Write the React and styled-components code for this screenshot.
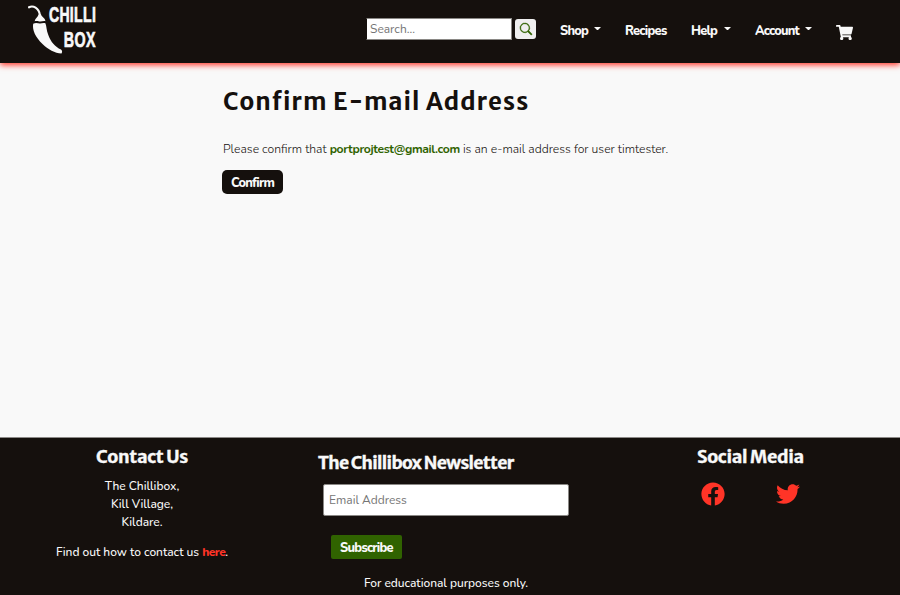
import React from "react";
import styled, { createGlobalStyle } from "styled-components";
import { BsSearch } from "react-icons/bs";
import { FaShoppingCart, FaFacebook, FaTwitter } from "react-icons/fa";

const ink = "#15100d";
const paper = "#f9f9f9";
const chilli = "#ff3427";
const leaf = "#306300";

const GlobalStyle = createGlobalStyle`
  *, *::before, *::after { box-sizing: border-box; }
  body {
    margin: 0;
    background: ${paper};
    color: ${ink};
    font: 12px/18px Nunito, "Open Sans", "Noto Sans", sans-serif;
  }
  input, button { font: inherit; margin: 0; }
  a { color: inherit; text-decoration: none; }
`;

const Page = styled.div`
  display: flex;
  flex-direction: column;
  height: 595px;
  overflow: hidden;
`;

const Header = styled.header`
  display: flex;
  align-items: flex-start;
  flex: none;
  height: 63px;
  padding: 0 47px 0 26px;
  background: ${ink};
  box-shadow: 0 2px 6px 0 ${chilli};
`;

const Brand = styled.a`
  flex: none;
  width: 74px;
  height: 58px;
  svg { display: block; overflow: visible; }
`;

const SearchForm = styled.form`
  display: flex;
  align-items: center;
  gap: 3px;
  margin: 18px 0 0 auto;
`;

const SearchInput = styled.input`
  width: 146px;
  height: 22px;
  padding: 0 3px;
  border: 1px solid #8a8885;
  border-left-color: ${ink};
  border-radius: 0;
  background: #fff;
  &::placeholder { color: #757575; opacity: 1; }
`;

const SearchButton = styled.button`
  display: flex;
  align-items: center;
  justify-content: center;
  width: 21px;
  height: 20px;
  padding: 0 0 1px;
  border: 0;
  border-radius: 3px;
  background: #efefef;
  color: ${leaf};
  svg { stroke: ${leaf}; stroke-width: 0.6; overflow: visible; }
`;

const Nav = styled.nav`
  display: flex;
  margin: 21px 0 0 24px;
  color: ${paper};
`;

const NavItem = styled.a`
  display: flex;
  width: ${(p) => p.$width}px;
  font-size: 12.8px;
  font-weight: 800;
  letter-spacing: ${(p) => p.$track}px;
  line-height: 20px;
  white-space: nowrap;
`;

const Caret = styled.span`
  width: 7px;
  height: 4px;
  margin: 6px 0 0 auto;
  border: 3.5px solid transparent;
  border-top-color: ${paper};
  border-bottom: 0;
`;

const NavLabel = styled.span`
  display: flex;
  width: ${(p) => p.$width}px;
`;

const CartLink = styled.a`
  display: flex;
  margin-top: 3px;
`;

const Main = styled.main`
  flex: 1;
  padding: 22px 0 0 223px;
`;

const Title = styled.h1`
  margin: 0;
  font: 600 24px/34px "Merriweather Sans", "Open Sans", sans-serif;
  letter-spacing: 1.06px;
  white-space: nowrap;
`;

const Message = styled.p`
  margin: 21px 0 0;
  font-size: 12.2px;
  font-weight: 300;
  white-space: nowrap;
`;

const Email = styled.a`
  color: ${leaf};
  font-weight: 700;
  letter-spacing: -0.34px;
`;

const ConfirmButton = styled.button`
  display: block;
  width: 61px;
  height: 24px;
  margin: 12px 0 0 -1px;
  padding: 1px 0 0;
  border: 0;
  border-radius: 5px;
  background: ${ink};
  color: ${paper};
  font-size: 12.8px;
  font-weight: 800;
  letter-spacing: -0.75px;
`;

const Footer = styled.footer`
  display: grid;
  grid-template-columns: 284px 314px 302px;
  grid-template-rows: 136px 21px;
  flex: none;
  height: 158px;
  border-top: 1px solid #8d8a88;
  background: ${ink};
  color: ${paper};
`;

const Contact = styled.section`
  padding-top: 7px;
  text-align: center;
`;

const Heading = styled.h2`
  margin: 0;
  font: 700 ${(p) => p.$size || 18}px/24px "Merriweather Sans", "Open Sans", sans-serif;
  letter-spacing: ${(p) => p.$track}px;
  -webkit-text-stroke: 0.35px ${paper};
  white-space: nowrap;
`;

const Line = styled.p`
  margin: ${(p) => p.$top || 0}px 0 0;
  font-weight: 500;
  letter-spacing: -0.03px;
  white-space: nowrap;
`;

const Here = styled.a`
  color: ${chilli};
  font-weight: 800;
  letter-spacing: -0.5px;
`;

const Newsletter = styled.form`
  padding: 13px 0 0 34px;
`;

const EmailInput = styled.input`
  display: block;
  width: 246px;
  height: 32px;
  margin: 9px 0 0 5px;
  padding: 0 5px;
  border: 1px solid #8a8885;
  border-radius: 2px;
  background: #fff;
  &::placeholder { color: #757575; opacity: 1; }
`;

const SubscribeButton = styled.button`
  display: block;
  width: 71px;
  height: 24px;
  margin: 19px 0 0 13px;
  padding: 1px 0 0;
  border: 0;
  border-radius: 2px;
  background: ${leaf};
  color: ${paper};
  font-size: 12.8px;
  font-weight: 800;
  letter-spacing: -0.75px;
`;

const Social = styled.section`
  padding: 7px 0 0 3px;
  text-align: center;
`;

const SocialLinks = styled.div`
  display: flex;
  gap: 51px;
  margin: 13px 0 0 100px;
  color: ${chilli};
`;

const Note = styled.p`
  grid-column: 1 / -1;
  margin: 0;
  padding-right: 8px;
  font-weight: 500;
  letter-spacing: -0.04px;
  text-align: center;
`;

function Logo() {
  return (
    <svg width="74" height="58" viewBox="26 0 74 58" fill={paper}>
      <path d="M29 7.3C33 5.2 38.9 7.8 39.9 15" fill="none" stroke={paper} strokeWidth="2.1" strokeLinecap="round" />
      <path d="M34.6 21.2C35.2 18.2 38 17.2 38.5 14.5L41 14.3C41.5 17 45.2 18 45.4 21.2C43 20.8 41 22 39.2 21.4C37.8 21 36 20.8 34.6 21.2Z" />
      <path d="M33.2 23.8C35.5 22.2 38 23.2 39.7 23.4C41.5 23.6 43 22.3 45.4 23.2C46.6 26 46.3 30 48.3 35C50.8 42 55 46.8 61 49.5C62.6 50.8 62.2 52 61.5 53.5C55 53.2 48 49.5 42.5 44C35.5 37.2 32 30 33.2 23.8Z" />
      <g fontFamily='"Liberation Sans", sans-serif' fontWeight="700" fontSize="22" stroke={paper} strokeWidth="0.7">
        <text transform="translate(48.9 22.4) scale(0.64 1)" letterSpacing="0.5">CHILLI</text>
        <text transform="translate(63.7 46.7) scale(0.65 1)" letterSpacing="0.6">BOX</text>
      </g>
    </svg>
  );
}

function Menu({ label, labelWidth, width, track }) {
  return (
    <NavItem href="#" $width={width} $track={track}>
      <NavLabel $width={labelWidth}>{label}<Caret /></NavLabel>
    </NavItem>
  );
}

export default function App() {
  return (
    <Page>
      <GlobalStyle />
      <Header>
        <Brand href="#"><Logo /></Brand>
        <SearchForm>
          <SearchInput placeholder="Search..." />
          <SearchButton type="button" aria-label="Search"><BsSearch size={12} /></SearchButton>
        </SearchForm>
        <Nav>
          <Menu label="Shop" labelWidth={41} width={65} track={-0.75} />
          <NavItem href="#" $width={66} $track={-0.7}>Recipes</NavItem>
          <Menu label="Help" labelWidth={40} width={64} track={-0.75} />
          <Menu label="Account" labelWidth={57} width={81} track={-0.8} />
          <CartLink href="#" aria-label="Cart"><FaShoppingCart size={17} /></CartLink>
        </Nav>
      </Header>
      <Main>
        <Title>Confirm E-mail Address</Title>
        <Message>
          Please confirm that <Email href="#">portprojtest@gmail.com</Email> is an e-mail address for user timtester.
        </Message>
        <ConfirmButton>Confirm</ConfirmButton>
      </Main>
      <Footer>
        <Contact>
          <Heading $track={-0.35}>Contact Us</Heading>
          <Line $top={8}>The Chillibox,</Line>
          <Line>Kill Village,</Line>
          <Line>Kildare.</Line>
          <Line $top={12}>Find out how to contact us <Here href="#">here</Here>.</Line>
        </Contact>
        <Newsletter>
          <Heading as="label" $size={17.6} $track={-0.66}>The Chillibox Newsletter</Heading>
          <EmailInput placeholder="Email Address" />
          <SubscribeButton type="button">Subscribe</SubscribeButton>
        </Newsletter>
        <Social>
          <Heading $track={-0.35}>Social Media</Heading>
          <SocialLinks>
            <a href="#" aria-label="Facebook"><FaFacebook size={24} /></a>
            <a href="#" aria-label="Twitter"><FaTwitter size={24} /></a>
          </SocialLinks>
        </Social>
        <Note>For educational purposes only.</Note>
      </Footer>
    </Page>
  );
}
